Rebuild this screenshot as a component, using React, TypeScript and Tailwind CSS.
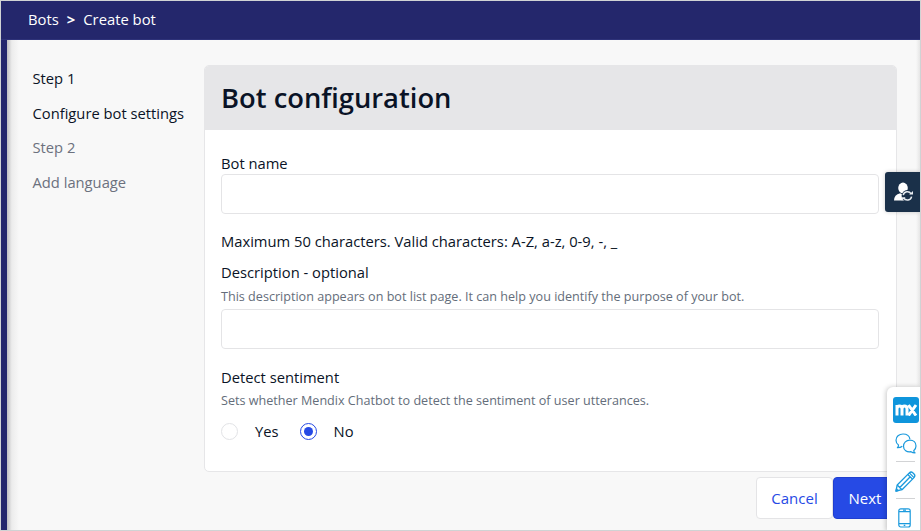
import type { ReactNode } from "react";

const steps = [
  { label: "Step 1", active: true },
  { label: "Configure bot settings", active: true },
  { label: "Step 2", active: false },
  { label: "Add language", active: false },
];

function Hint({ children }: { children: ReactNode }) {
  return <p className="text-[12.6px] leading-[18px] whitespace-nowrap text-[#646d7a]">{children}</p>;
}

function Field({ id }: { id: string }) {
  return (
    <input
      id={id}
      type="text"
      className="block h-10 w-full rounded-[4px] border border-[#e4e4e6] bg-white px-3 text-[15px] outline-none"
    />
  );
}

function Radio({ label, checked }: { label: string; checked: boolean }) {
  return (
    <label className="flex items-center gap-[17px]">
      <span
        className={
          checked
            ? "flex size-[17px] items-center justify-center rounded-full border border-[#264ae5] bg-white"
            : "flex size-[17px] rounded-full border border-[#e2e3e6] bg-white"
        }
      >
        {checked && <span className="size-[9px] rounded-full bg-[#264ae5]" />}
      </span>
      <span>{label}</span>
    </label>
  );
}

function FeedbackBar() {
  return (
    <aside className="absolute top-[386px] right-0 flex h-[144px] w-[33px] flex-col items-center rounded-tl-[6px] bg-white pt-2.5 pl-[3px] shadow-[-1px_0_5px_rgba(0,0,0,0.22)]">
      <div className="ml-[2px] flex h-[26px] w-[26px] shrink-0 items-center justify-center rounded-[3px] bg-[#0f95dc]">
        <svg width="23" height="12" viewBox="0 0 22 12" fill="none" stroke="#fff" strokeWidth="3">
          <path d="M1.5 11.5V1M1.5 5Q1.5 2 4 2T6.5 5V11.5M6.5 5Q6.5 2 9 2T11.5 5V11.5M13 1L20.5 11.5M20.5 1L13 11.5" />
        </svg>
      </div>
      <svg className="mt-[10px] ml-[2px] shrink-0" width="22" height="21" viewBox="0 0 22 21" fill="none" stroke="#1b9add" strokeWidth="1.2" strokeLinejoin="round">
        <path d="M7.3 13.2C6.2 14.2 4.5 14.7 2.4 14.7C3.3 13.8 3.6 12.8 3.5 11.9C1.8 10.8 1 9.1 1 7.2C1 3.7 4 1 8 1C11.7 1 14.5 3.1 14.9 6.1" />
        <path d="M18.7 17.7C18.8 18.5 19.2 19.2 20 19.8C18.3 19.8 17 19.4 16 18.7C11.8 19.5 8.5 17.1 8.5 13.2C8.5 9.7 11.2 7.1 14.8 7.1C18.5 7.1 21 9.6 21 12.9C21 14.9 20.2 16.5 18.7 17.7Z" />
      </svg>
      <div className="mt-[7px] h-px w-[19px] shrink-0 bg-[#d2d3d5]" />
      <svg className="mt-[9px] shrink-0" width="21" height="21" viewBox="0 0 21 21" fill="none" stroke="#1b9add" strokeWidth="1.3" strokeLinejoin="round">
        <path d="M1 20L2.2 14L14.3 1.9Q16 .2 18 1.9L19 3Q20.7 4.8 19 6.6L7 18.7Z" />
        <path d="M2.2 14L7 18.7M12.8 3.5L17.5 8.1M14.3 1.9L19 6.6M4.8 16.5L15 6M1 20L3 19.5L1.5 18Z" />
      </svg>
      <div className="mt-[6px] h-px w-[19px] shrink-0 bg-[#d2d3d5]" />
      <svg className="mt-[9px] mr-[2px] shrink-0" width="13" height="20" viewBox="0 0 13 20" fill="none" stroke="#1b9add" strokeWidth="1.2">
        <rect x=".8" y=".8" width="11.4" height="18.2" rx="2" />
        <path d="M1 3.6H12M1 15.6H12M5 2.2H8M5.7 17.3H7.3" />
      </svg>
    </aside>
  );
}

export default function App() {
  return (
    <div className="relative flex h-[531px] w-[921px] flex-col overflow-hidden border border-[#d0d3d4] bg-[#f8f8f8] font-['Open_Sans',sans-serif] text-[14.74px] leading-5 text-[#0a1326]">
      <header className="flex h-[39px] shrink-0 items-center border-b border-[#2e3279] bg-[#24276c] pb-[2px] pl-[27px] text-[14.8px] text-white">
        <span>Bots</span>
        <span className="mx-2 font-bold">&gt;</span>
        <span>Create bot</span>
      </header>
      <div className="flex min-h-0 flex-1">
        <div className="w-1.5 shrink-0 bg-[#24276c]" />
        <div className="w-3 shrink-0 bg-linear-to-r from-[#bfbfc1] via-[#ececec] via-40% to-[#f8f8f8]" />
        <nav className="flex w-[185px] shrink-0 flex-col gap-[14.7px] pt-7 pl-[13.5px] whitespace-nowrap">
          {steps.map((step) => (
            <span key={step.label} className={step.active ? "" : "text-[#6c717e]"}>
              {step.label}
            </span>
          ))}
        </nav>
        <main className="flex w-[693px] shrink-0 flex-col pt-[25px]">
          <section className="h-[407px] overflow-hidden rounded-[5px] border border-[#e6e6e8] bg-white">
            <h1 className="flex h-16 items-center bg-[#e6e6e8] pl-4 text-[27.35px] font-semibold">
              Bot configuration
            </h1>
            <div className="pt-[23px] pr-[17px] pl-4">
              <label htmlFor="bot-name" className="mb-px block">Bot name</label>
              <Field id="bot-name" />
              <p className="mt-[17px] whitespace-nowrap">Maximum 50 characters. Valid characters: A-Z, a-z, 0-9, -, _</p>
              <label htmlFor="description" className="mt-[11px] mb-[6px] block">Description - optional</label>
              <Hint>This description appears on bot list page. It can help you identify the purpose of your bot.</Hint>
              <div className="mt-[3px]">
                <Field id="description" />
              </div>
              <p className="mt-[18px] mb-[5px]">Detect sentiment</p>
              <Hint>Sets whether Mendix Chatbot to detect the sentiment of user utterances.</Hint>
              <div className="mt-[11px] flex gap-[21px]">
                <Radio label="Yes" checked={false} />
                <Radio label="No" checked />
              </div>
            </div>
          </section>
          <div className="mt-[5px] flex justify-end text-[15px]">
            <button className="h-[42px] w-[77px] rounded-[4px] border border-[#e4e4e6] bg-white pb-px text-[#264ae5]">Cancel</button>
            <button className="h-[42px] w-[64px] rounded-[4px] border border-[#203fd0] bg-[#264ae5] pb-px text-white">Next</button>
          </div>
        </main>
        <div className="ml-auto w-1 bg-linear-to-r from-[#f8f8f8] to-[#e6e6e6]" />
      </div>
      <button className="absolute top-[171px] right-0 flex h-10 w-[35px] items-center rounded-l-[3px] bg-[#1a3049] pl-[9px] shadow-[0_0_4px_rgba(0,0,0,0.2)]">
        <svg width="20" height="20" viewBox="0 0 20 20">
          <ellipse cx="9" cy="6" rx="4.8" ry="5.4" fill="#fff" />
          <path d="M0 18.5Q0 12.8 6.2 11.2L9 13L12 11V18.5Z" fill="#fff" />
          <circle cx="13.4" cy="13.9" r="5.8" fill="#1a3049" />
          <path d="M9.2 13.2A4.3 4.3 0 0 1 17.1 11.8M17.6 14.6A4.3 4.3 0 0 1 9.7 16" fill="none" stroke="#e8ecf0" strokeWidth="1.5" />
          <path d="M15.2 12.6H19V9ZM11.6 15.2H7.8V18.8Z" fill="#e8ecf0" />
        </svg>
      </button>
      <FeedbackBar />
    </div>
  );
}
